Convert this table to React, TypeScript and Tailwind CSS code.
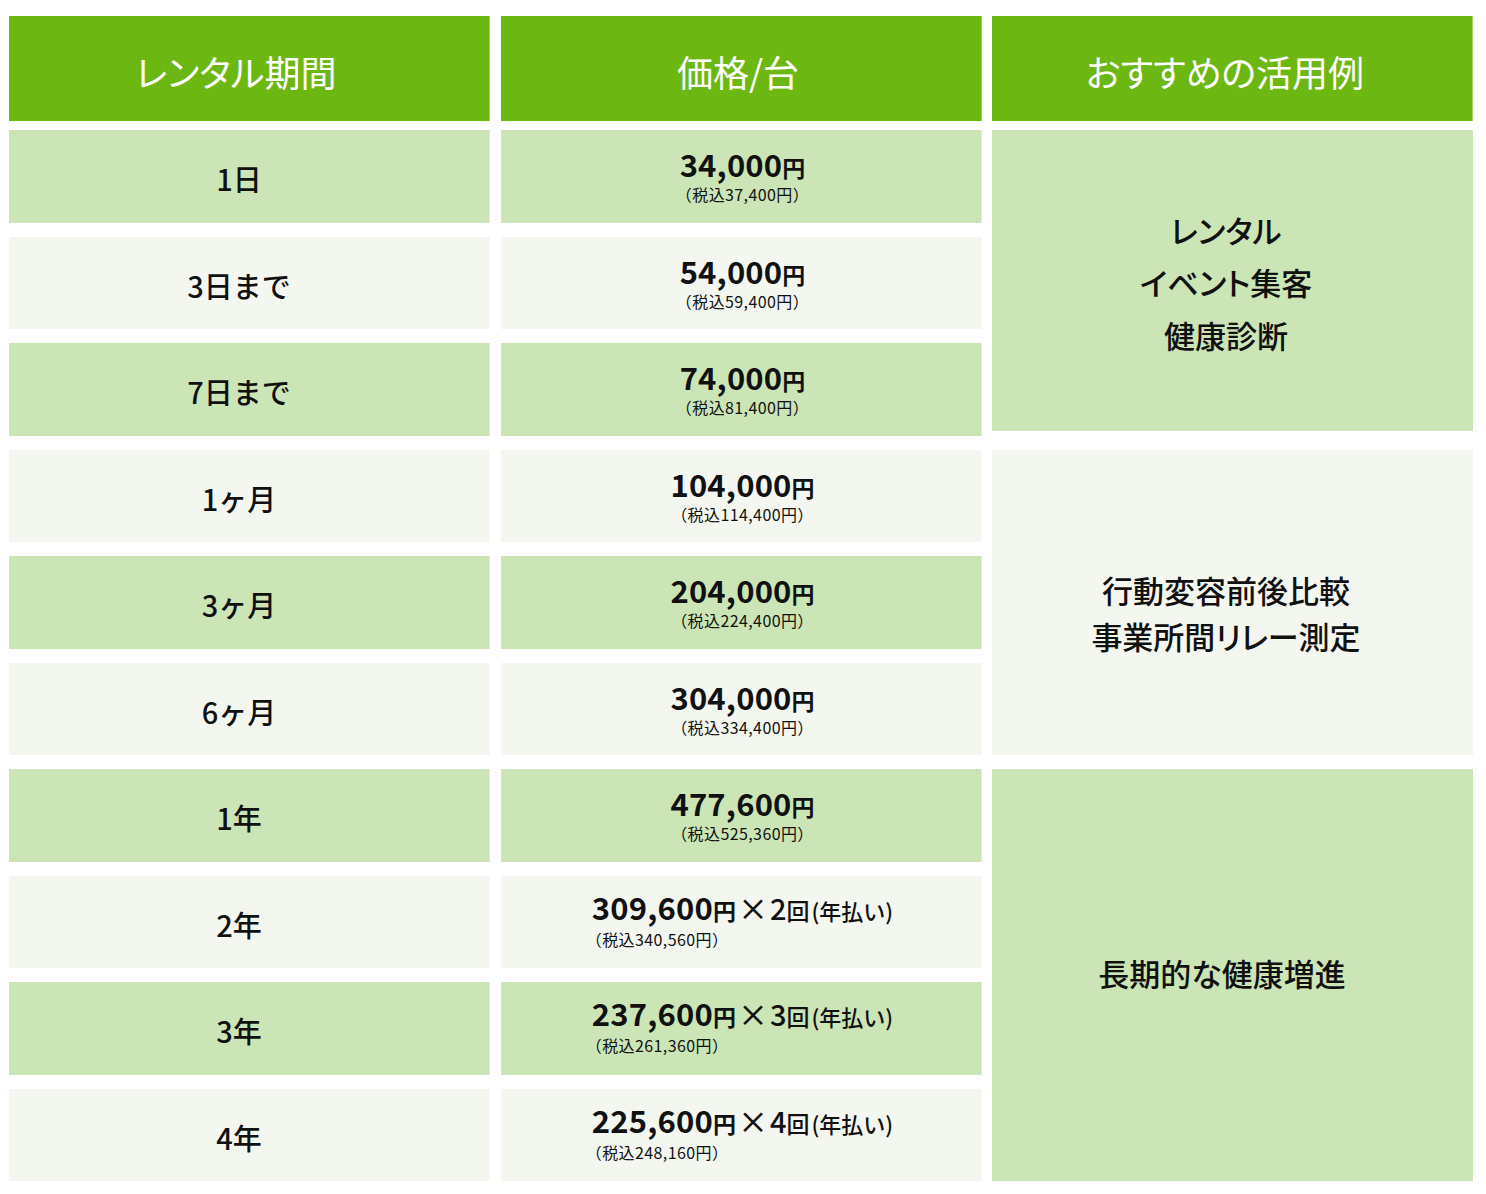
import React from "react";

const font = { fontFamily: '"Noto Sans CJK JP", "Noto Sans", sans-serif' };

type Row = { period: string; price: string; tax: string; times?: string };

const rows: Row[] = [
  { period: "1日", price: "34,000", tax: "37,400" },
  { period: "3日まで", price: "54,000", tax: "59,400" },
  { period: "7日まで", price: "74,000", tax: "81,400" },
  { period: "1ヶ月", price: "104,000", tax: "114,400" },
  { period: "3ヶ月", price: "204,000", tax: "224,400" },
  { period: "6ヶ月", price: "304,000", tax: "334,400" },
  { period: "1年", price: "477,600", tax: "525,360" },
  { period: "2年", price: "309,600", tax: "340,560", times: "2" },
  { period: "3年", price: "237,600", tax: "261,360", times: "3" },
  { period: "4年", price: "225,600", tax: "248,160", times: "4" },
];

const green = "bg-[#cbe5b6]";
const gray = "bg-[#f4f7f0]";

function Price({ r }: { r: Row }) {
  if (r.times) {
    return (
      <div className="flex flex-col items-start text-[#111]">
        <div className="flex items-baseline whitespace-nowrap leading-[31px]">
          <span className="text-[31px] font-bold tracking-[0.2px]">{r.price}</span>
          <span className="text-[23px] font-bold">円</span>
          <span className="text-[30px] font-medium ml-[2px]">×</span>
          <span className="text-[29px] font-medium ml-[2px]">{r.times}</span>
          <span className="text-[23px] font-medium">回</span>
          <span className="text-[22px] font-medium ml-[2px]">(年払い)</span>
        </div>
        <div className="text-[16px] tracking-[0.4px] leading-[16px] mt-[5px] -ml-[6px] whitespace-nowrap">（税込{r.tax}円）</div>
      </div>
    );
  }
  return (
    <div className="flex flex-col items-center text-[#111]">
      <div className="flex items-baseline whitespace-nowrap leading-[31px]">
        <span className="text-[31px] font-bold tracking-[0.2px]">{r.price}</span>
        <span className="text-[23px] font-bold">円</span>
      </div>
      <div className="text-[16px] tracking-[0.4px] leading-[16px] mt-[3px] whitespace-nowrap">（税込{r.tax}円）</div>
    </div>
  );
}

const rowStarts = [
  "row-start-1",
  "row-start-2",
  "row-start-3",
  "row-start-4",
  "row-start-5",
  "row-start-6",
  "row-start-7",
  "row-start-8",
  "row-start-9",
  "row-start-10",
];

export default function App() {
  return (
    <div className="w-[1486px] h-[1194px] bg-white pt-[16px] pl-[9px]" style={font}>
      <div className="grid grid-cols-[481px_481px_481px] gap-x-[10.5px] text-white text-[36px] font-normal [font-feature-settings:'palt']">
        <div className="h-[105px] bg-[#6db713] border-r border-[#9fd15f] flex items-center justify-center pt-[4px] pr-[26px]">
          レンタル期間
        </div>
        <div className="h-[105px] bg-[#6db713] border-r border-[#9fd15f] flex items-center justify-center pt-[4px] pr-[5px]">
          価格/台
        </div>
        <div className="h-[105px] bg-[#6db713] border-r border-[#9fd15f] flex items-center justify-center pt-[4px] pr-[14px]">
          おすすめの活用例
        </div>
      </div>
      <div className="mt-[9px] grid grid-cols-[481px_481px_481px] grid-rows-[repeat(10,92.5px)] gap-x-[10.5px] gap-y-[14px]">
        {rows.map((r, i) => {
          const bg = i % 2 === 0 ? green : gray;
          const edge = i % 2 === 0 ? "border-[#dbeecd]" : "border-[#f8faf5]";
          return (
            <React.Fragment key={r.period}>
              <div
                className={`${bg} ${rowStarts[i]} col-start-1 border-r ${edge} flex items-center justify-center pt-[5px] pr-[20px] text-[#111] text-[29px] font-medium`}
              >
                {r.period}
              </div>
              <div
                className={`${bg} ${rowStarts[i]} col-start-2 border-r ${edge} flex items-center justify-center pl-[4px] ${r.times ? "pb-[6px]" : "pb-[2px]"}`}
              >
                <Price r={r} />
              </div>
            </React.Fragment>
          );
        })}
        <div className={`${green} col-start-3 row-start-1 row-span-3 mb-[5px] flex flex-col items-center justify-center text-[#111] text-[31px] font-medium leading-[52.5px] pt-[4px] pr-[13px] [font-feature-settings:'palt']`}>
          <div>レンタル</div>
          <div>イベント集客</div>
          <div>健康診断</div>
        </div>
        <div className={`${gray} col-start-3 row-start-4 row-span-3 flex flex-col items-center justify-center text-[#111] text-[31px] font-medium leading-[46px] pt-[22px] pr-[13px] [font-feature-settings:'palt']`}>
          <div>行動変容前後比較</div>
          <div>事業所間リレー測定</div>
        </div>
        <div className={`${green} col-start-3 row-start-7 row-span-4 flex flex-col items-center justify-center text-[#111] text-[31px] font-medium pb-[4px] pr-[21px] [font-feature-settings:'palt']`}>
          <div>長期的な健康増進</div>
        </div>
      </div>
    </div>
  );
}
